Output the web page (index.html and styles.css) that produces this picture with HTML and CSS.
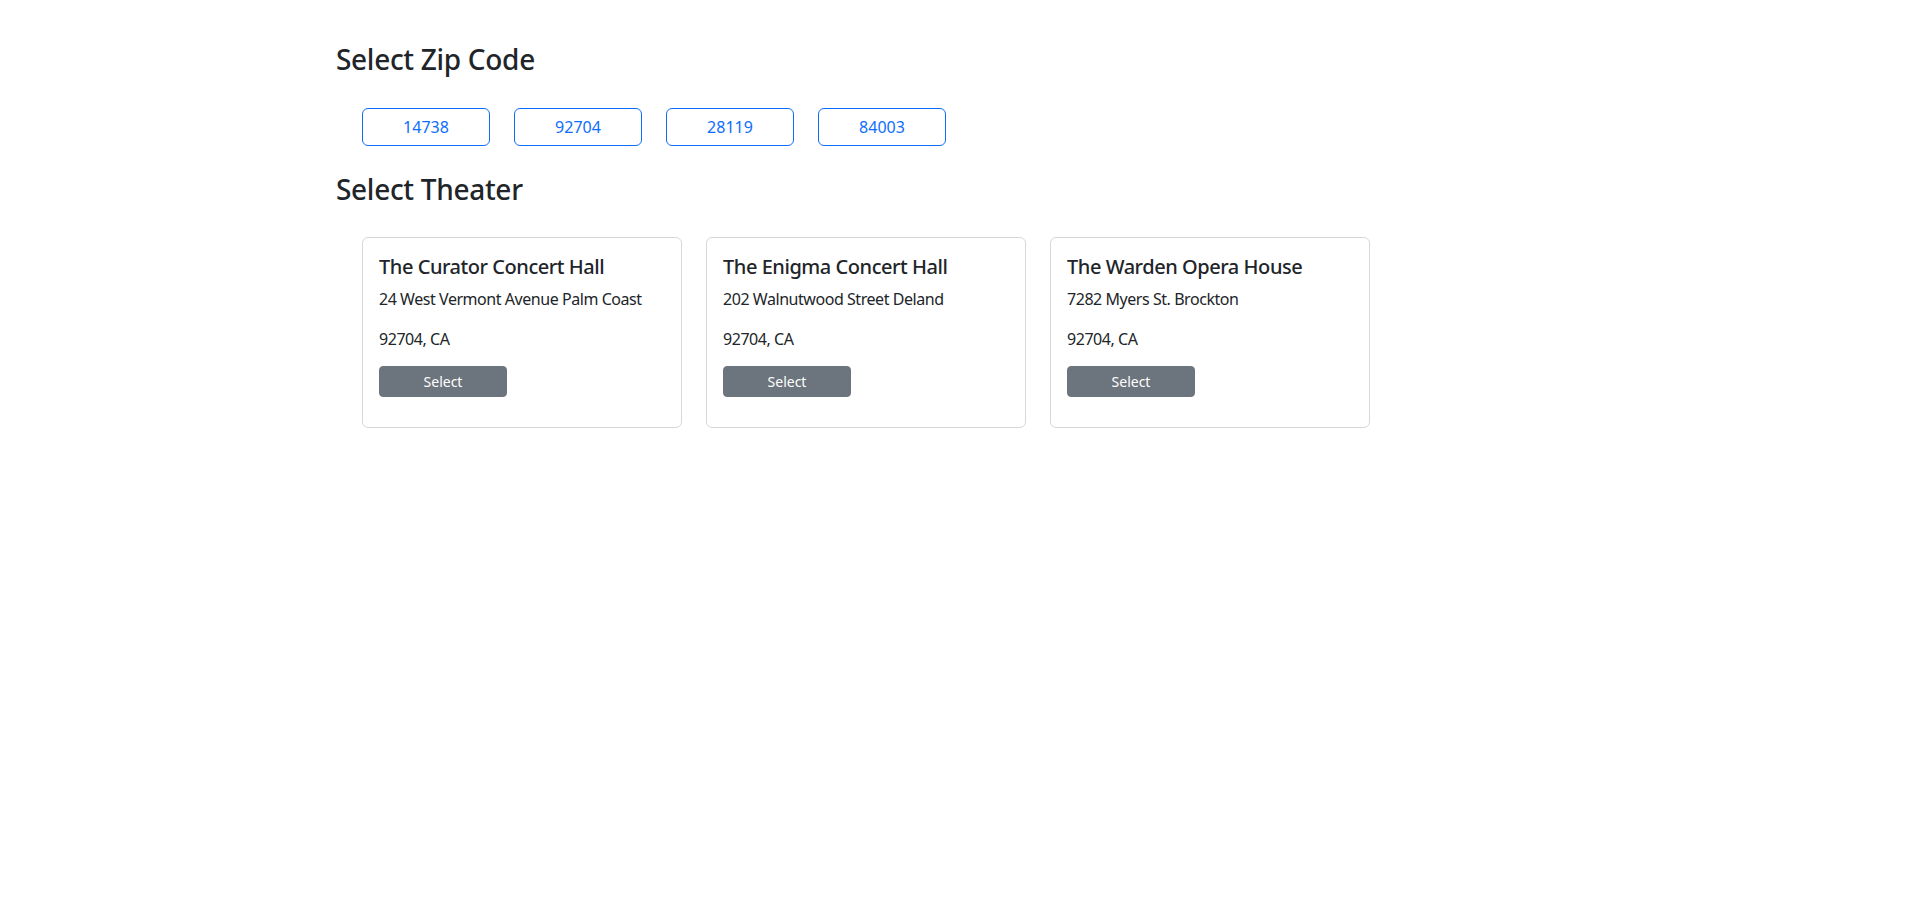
FILE: index.html
```html
<!DOCTYPE html>
<html lang="en">
<head>
<meta charset="utf-8">
<title>Select Theater</title>
<link rel="stylesheet" href="styles.css">
</head>
<body>
<main class="container">
  <h3 class="section-title">Select Zip Code</h3>
  <div class="zip-list">
    <button class="zip-btn">14738</button>
    <button class="zip-btn">92704</button>
    <button class="zip-btn">28119</button>
    <button class="zip-btn">84003</button>
  </div>
  <h3 class="section-title theater-title">Select Theater</h3>
  <div class="card-list">
    <div class="card">
      <h5 class="card-title">The Curator Concert Hall</h5>
      <p class="card-text">24 West Vermont Avenue Palm Coast</p>
      <p class="card-text">92704, CA</p>
      <button class="select-btn">Select</button>
    </div>
    <div class="card">
      <h5 class="card-title">The Enigma Concert Hall</h5>
      <p class="card-text">202 Walnutwood Street Deland</p>
      <p class="card-text">92704, CA</p>
      <button class="select-btn">Select</button>
    </div>
    <div class="card">
      <h5 class="card-title">The Warden Opera House</h5>
      <p class="card-text">7282 Myers St. Brockton</p>
      <p class="card-text">92704, CA</p>
      <button class="select-btn">Select</button>
    </div>
  </div>
</main>
</body>
</html>
```

FILE: styles.css
```css
* { box-sizing: border-box; }
html, body { margin: 0; background: #fff; }
body {
  font-family: "Segoe UI", "Noto Sans", "Liberation Sans", sans-serif;
  color: #212529;
  font-size: 16px;
  line-height: 24px;
}
.container {
  padding: 42px 0 0 336px;
}
.section-title {
  margin: 0;
  font-size: 28px;
  font-weight: 500;
  line-height: 34px;
  letter-spacing: -0.3px;
}
.zip-list {
  display: flex;
  gap: 24px;
  margin: 32px 0 0 26px;
}
.zip-btn {
  width: 128px;
  height: 38px;
  padding: 6px 12px;
  border: 1px solid #0d6efd;
  border-radius: 6px;
  background: #fff;
  color: #0d6efd;
  font-family: inherit;
  font-size: 16px;
  line-height: 24px;
}
.theater-title {
  margin-top: 26px;
}
.card-list {
  display: flex;
  gap: 24px;
  margin: 31px 0 0 26px;
}
.card {
  width: 320px;
  padding: 17px 16px 30px 16px;
  border: 1px solid #d6d8db;
  border-radius: 6px;
}
.card-title {
  margin: 0 0 8px;
  font-size: 20px;
  font-weight: 500;
  line-height: 24px;
  letter-spacing: -0.45px;
}
.card-text {
  margin: 0 0 16px;
  font-size: 16px;
  line-height: 24px;
  letter-spacing: -0.45px;
}
.card-text:last-of-type {
  margin-bottom: 15px;
}
.select-btn {
  display: block;
  width: 128px;
  height: 31px;
  padding: 4px 8px;
  border: 1px solid #6c757d;
  border-radius: 4px;
  background: #6c757d;
  color: #fff;
  font-family: inherit;
  font-size: 14px;
  line-height: 21px;
}
```
